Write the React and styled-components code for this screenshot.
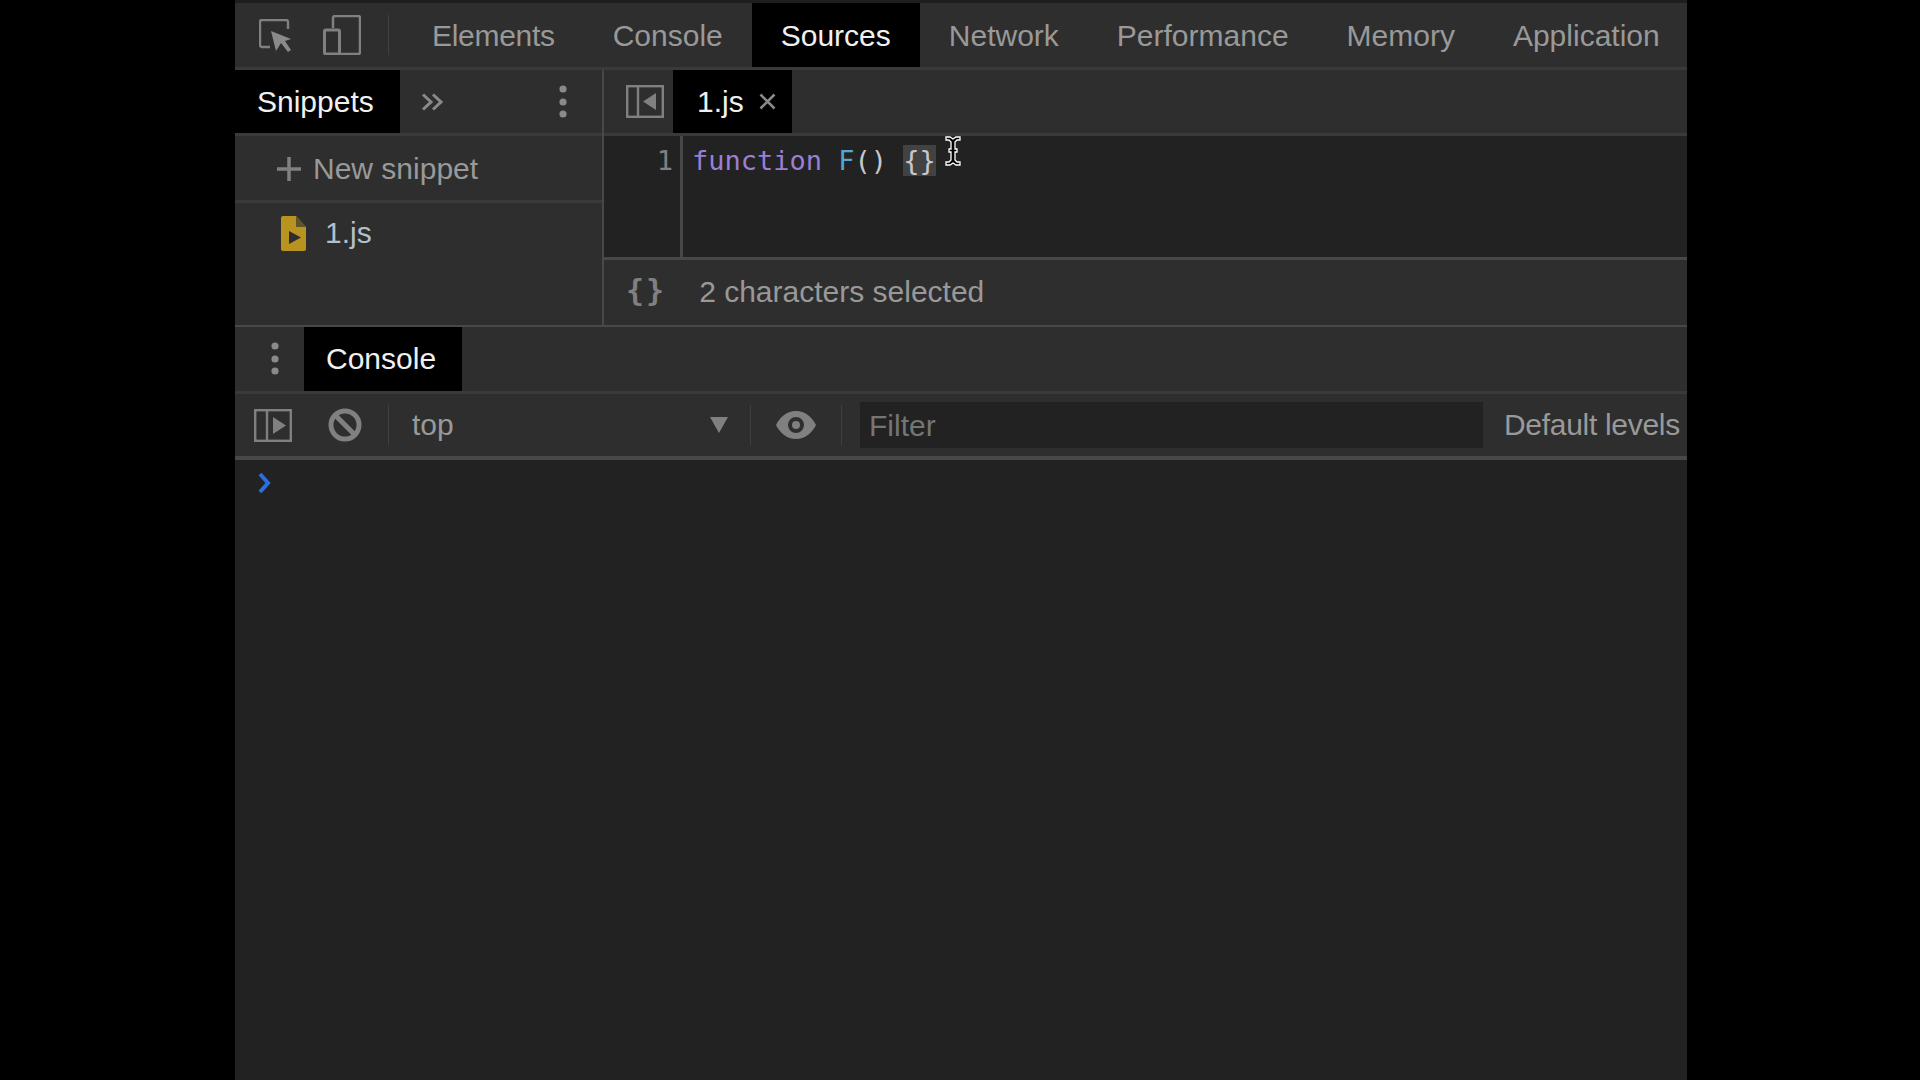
import styled, { createGlobalStyle } from 'styled-components'

const GlobalStyle = createGlobalStyle`
  html, body {
    margin: 0;
    height: 100%;
    background: #000;
    overflow: hidden;
  }
  * {
    box-sizing: border-box;
  }
`

const Panel = styled.div`
  width: 1452px;
  height: 1080px;
  margin-left: 235px;
  background: #2e2e2e;
  display: flex;
  flex-direction: column;
  font-family: "Liberation Sans", Arial, sans-serif;
  font-size: 30px;
  color: #999;
  position: relative;
`

const MainTabs = styled.div`
  height: 70px;
  flex: none;
  display: flex;
  align-items: stretch;
  border-top: 3px solid #1e1e1e;
  border-bottom: 3px solid #3a3a3a;
  padding-left: 20px;
`

const ToolIcon = styled.div`
  width: ${p => p.$w}px;
  margin-right: ${p => p.$mr || 0}px;
  padding-left: ${p => p.$pl || 0}px;
  display: flex;
  align-items: center;
  justify-content: center;
  flex: none;
`

const VLine = styled.div`
  width: 1px;
  height: ${p => p.$h}px;
  background: ${p => p.$c || '#404040'};
  align-self: center;
  flex: none;
`

const Tab = styled.div`
  padding: 0 ${p => p.$pad || 29}px;
  padding-right: ${p => p.$padRight || p.$pad || 29}px;
  display: flex;
  align-items: center;
  flex: none;
  white-space: nowrap;
  background: ${p => (p.$active ? '#000' : 'transparent')};
  color: ${p => (p.$active ? '#f0f0f0' : '#999')};
`

const MainTab = styled(Tab)`
  padding-top: 2px;
`

const FirstTab = styled(MainTab)`
  margin-left: 14px;
  letter-spacing: -0.3px;
`

const SourcesArea = styled.div`
  height: 257px;
  flex: none;
  display: flex;
  border-bottom: 2px solid #484848;
`

const Navigator = styled.div`
  width: 369px;
  flex: none;
  border-right: 2px solid #484848;
  display: flex;
  flex-direction: column;
`

const NavTabs = styled.div`
  height: 66px;
  flex: none;
  display: flex;
  align-items: stretch;
  justify-content: space-between;
  border-bottom: 3px solid #3a3a3a;
`

const NavTabsLeft = styled.div`
  display: flex;
  align-items: stretch;
`

const NewSnippet = styled.div`
  height: 67px;
  flex: none;
  display: flex;
  align-items: center;
  padding: 1px 0 0 42px;
  gap: 12px;
  border-bottom: 3px solid #3a3a3a;
`

const SnippetItem = styled.div`
  height: 60px;
  display: flex;
  align-items: center;
  padding-left: 46px;
  gap: 19px;
  color: #b4bfcc;
`

const EditorColumn = styled.div`
  flex: 1;
  display: flex;
  flex-direction: column;
  min-width: 0;
`

const EditorTabs = styled.div`
  height: 66px;
  flex: none;
  display: flex;
  align-items: stretch;
  padding-left: 22px;
  border-bottom: 3px solid #3a3a3a;
`

const FileTab = styled(Tab)`
  padding: 0 16px 0 24px;
  gap: 15px;
  margin-left: 9px;
`

const Editor = styled.div`
  height: 124px;
  flex: none;
  display: flex;
  background: #222;
  border-bottom: 3px solid #484848;
  position: relative;
`

const Gutter = styled.div`
  width: 79px;
  flex: none;
  border-right: 3px solid #484848;
  text-align: right;
  padding: 7px 7px 0 0;
  font-family: "DejaVu Sans Mono", "Liberation Mono", monospace;
  font-size: 27px;
  line-height: 36px;
  color: #808080;
`

const Code = styled.div`
  padding: 7px 0 0 9px;
  font-family: "DejaVu Sans Mono", "Liberation Mono", monospace;
  font-size: 27px;
  line-height: 36px;
  color: #c8c8c8;
  white-space: pre;
`

const Keyword = styled.span`
  color: #9a7fd5;
`

const FnName = styled.span`
  color: #54a5d8;
`

const Selected = styled.span`
  background: #424242;
`

const Cursor = styled.svg`
  position: absolute;
  left: 341px;
  top: 0;
`

const StatusBar = styled.div`
  flex: 1;
  display: flex;
  align-items: center;
  padding: 0 0 1px 22px;
  gap: 33px;
`

const BraceIcon = styled.span`
  font-family: "DejaVu Sans Mono", monospace;
  font-weight: 700;
  font-size: 30px;
  letter-spacing: 2px;
  padding-bottom: 3px;
  color: #808080;
`

const DrawerTabs = styled.div`
  height: 67px;
  flex: none;
  display: flex;
  align-items: stretch;
  border-bottom: 3px solid #3a3a3a;
`

const ConsoleBar = styled.div`
  height: 66px;
  flex: none;
  display: flex;
  align-items: center;
  border-bottom: 4px solid #484848;
  padding-left: 19px;
`

const ContextSelect = styled.div`
  width: 361px;
  flex: none;
  display: flex;
  align-items: center;
  justify-content: space-between;
  padding: 0 22px 0 23px;
`

const FilterInput = styled.div`
  width: 623px;
  height: 46px;
  flex: none;
  margin-left: 18px;
  background: #222;
  color: #757575;
  display: flex;
  align-items: center;
  padding: 1px 0 0 9px;
`

const Levels = styled.div`
  margin-left: 21px;
  white-space: nowrap;
  letter-spacing: -0.3px;
`

const ConsoleBody = styled.div`
  flex: 1;
  background: #222;
  padding: 7px 0 0 22px;
`

const Kebab = () => (
  <svg width="10" height="36" viewBox="0 0 10 36">
    <circle cx="5" cy="5" r="3.6" fill="#8a8a8a" />
    <circle cx="5" cy="18" r="3.6" fill="#8a8a8a" />
    <circle cx="5" cy="30" r="3.6" fill="#8a8a8a" />
  </svg>
)

const tabs = ['Console', 'Sources', 'Network', 'Performance', 'Memory', 'Application']

export default function App() {
  return (
    <>
      <GlobalStyle />
      <Panel>
        <MainTabs>
          <ToolIcon $w={38} $mr={30} $pl={4}>
            <svg width="34" height="33" viewBox="0 0 34 33">
              <path d="M11 28H3a2 2 0 0 1-2-2V3a2 2 0 0 1 2-2h24a2 2 0 0 1 2 2v7" fill="none" stroke="#808080" strokeWidth="2.4" />
              <path d="M12 12l20 8-6 2 6 9-3 2-7-9-5 8z" fill="#8a8a8a" />
            </svg>
          </ToolIcon>
          <ToolIcon $w={38} $mr={27}>
            <svg width="38" height="40" viewBox="0 0 38 40">
              <path d="M10 13V3a2 2 0 0 1 2-2h23a2 2 0 0 1 2 2v34a2 2 0 0 1-2 2H17" fill="none" stroke="#808080" strokeWidth="2.5" />
              <rect x="1.5" y="15" width="15" height="24" rx="1.5" fill="none" stroke="#808080" strokeWidth="3" />
            </svg>
          </ToolIcon>
          <VLine $h={40} />
          <FirstTab>Elements</FirstTab>
          {tabs.map(t => (
            <MainTab key={t} $active={t === 'Sources'}>{t}</MainTab>
          ))}
        </MainTabs>

        <SourcesArea>
          <Navigator>
            <NavTabs>
              <NavTabsLeft>
                <Tab $pad={22} $padRight={26} $active>Snippets</Tab>
                <ToolIcon $w={66}>
                  <svg width="23" height="18" viewBox="0 0 23 18">
                    <path d="M2 1.500l8 7.500-8 7.500M12 1.500l8 7.500-8 7.500" fill="none" stroke="#8a8a8a" strokeWidth="3" />
                  </svg>
                </ToolIcon>
              </NavTabsLeft>
              <ToolIcon $w={48} $mr={15}>
                <Kebab />
              </ToolIcon>
            </NavTabs>
            <NewSnippet>
              <svg width="24" height="24" viewBox="0 0 24 24">
                <path d="M12 0v24M0 12h24" stroke="#808080" strokeWidth="3.5" />
              </svg>
              New snippet
            </NewSnippet>
            <SnippetItem>
              <svg width="25" height="35" viewBox="0 0 25 35">
                <path d="M2 0h13l10 11v22a2 2 0 0 1-2 2H2a2 2 0 0 1-2-2V2a2 2 0 0 1 2-2z" fill="#b8931f" />
                <path d="M15 0l10 11H15z" fill="#5f5426" />
                <path d="M8 15l12 6.500-12 6.500z" fill="#2e2e2e" />
              </svg>
              1.js
            </SnippetItem>
          </Navigator>

          <EditorColumn>
            <EditorTabs>
              <ToolIcon $w={38}>
                <svg width="38" height="33" viewBox="0 0 38 33">
                  <rect x="1.2" y="1.2" width="35.6" height="30.6" fill="none" stroke="#808080" strokeWidth="2.4" />
                  <path d="M12 1v31" stroke="#808080" strokeWidth="2.4" />
                  <path d="M30 8v17l-13-8.500z" fill="#808080" />
                </svg>
              </ToolIcon>
              <FileTab $active>
                1.js
                <svg width="17" height="17" viewBox="0 0 17 17">
                  <path d="M1.500 1.500l14 14M15.500 1.500l-14 14" stroke="#8a8a8a" strokeWidth="2.6" />
                </svg>
              </FileTab>
            </EditorTabs>
            <Editor>
              <Gutter>1</Gutter>
              <Code>
                <Keyword>function</Keyword> <FnName>F</FnName>() <Selected>{'{}'}</Selected>
              </Code>
              <Cursor width="16" height="30" viewBox="0 0 16 30">
                <path d="M1 1h4l3 2 3-2h4v3h-3l-2 2v7h2v3h-2v8l2 2h3v3h-4l-3-2-3 2H1v-3h3l2-2v-8H4v-3h2V6L4 4H1z" fill="#000" stroke="#fff" strokeWidth="1.300" />
              </Cursor>
            </Editor>
            <StatusBar>
              <BraceIcon>{'{}'}</BraceIcon>
              2 characters selected
            </StatusBar>
          </EditorColumn>
        </SourcesArea>

        <DrawerTabs>
          <ToolIcon $w={69} $pl={11}>
            <Kebab />
          </ToolIcon>
          <Tab $pad={22} $padRight={26} $active>Console</Tab>
        </DrawerTabs>

        <ConsoleBar>
          <ToolIcon $w={38} $mr={36}>
            <svg width="38" height="33" viewBox="0 0 38 33">
              <rect x="1.200" y="1.200" width="35.600" height="30.600" fill="none" stroke="#808080" strokeWidth="2.400" />
              <path d="M13 1v31" stroke="#808080" strokeWidth="2.400" />
              <path d="M19 8v17l13-8.500z" fill="#808080" />
            </svg>
          </ToolIcon>
          <ToolIcon $w={34} $mr={26}>
            <svg width="34" height="34" viewBox="0 0 34 34">
              <circle cx="17" cy="17" r="14" fill="none" stroke="#808080" strokeWidth="5" />
              <path d="M7 7l20 20" stroke="#808080" strokeWidth="5" />
            </svg>
          </ToolIcon>
          <VLine $h={40} />
          <ContextSelect>
            top
            <svg width="18" height="16" viewBox="0 0 18 16">
              <path d="M0 0h18L9 16z" fill="#808080" />
            </svg>
          </ContextSelect>
          <VLine $h={40} />
          <ToolIcon $w={90}>
            <svg width="40" height="28" viewBox="0 0 40 28">
              <path fillRule="evenodd" d="M20 0c9 0 16 6 20 14-4 8-11 14-20 14S4 22 0 14C4 6 11 0 20 0zm0 6a8 8 0 1 0 0 16 8 8 0 0 0 0-16zm0 4a4 4 0 1 1 0 8 4 4 0 0 1 0-8z" fill="#808080" />
            </svg>
          </ToolIcon>
          <VLine $h={40} />
          <FilterInput>Filter</FilterInput>
          <Levels>Default levels</Levels>
        </ConsoleBar>

        <ConsoleBody>
          <svg width="15" height="22" viewBox="0 0 15 22">
            <path d="M3 2l8 9-8 9" fill="none" stroke="#2a6fe0" strokeWidth="4" />
          </svg>
        </ConsoleBody>
      </Panel>
    </>
  )
}
